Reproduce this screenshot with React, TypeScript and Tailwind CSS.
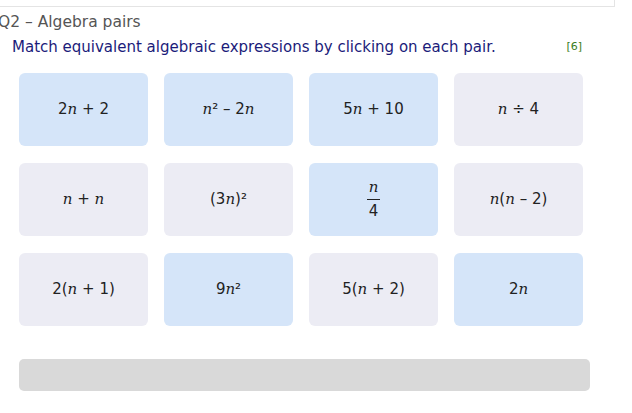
const N = () => <i className="font-['DejaVu_Serif',serif] italic">n</i>

type Card = { body: React.ReactNode; blue: boolean }

const cards: Card[] = [
  { body: <>2<N /> + 2</>, blue: true },
  { body: <><N />² – 2<N /></>, blue: true },
  { body: <>5<N /> + 10</>, blue: true },
  { body: <><N /> ÷ 4</>, blue: false },
  { body: <><N /> + <N /></>, blue: false },
  { body: <>(3<N />)²</>, blue: false },
  {
    body: (
      <span className="flex flex-col items-center leading-none">
        <span className="pb-[4px]"><N /></span>
        <span className="w-[13px] border-t border-[#222]" />
        <span className="pt-[4px]">4</span>
      </span>
    ),
    blue: true,
  },
  { body: <><N />(<N /> – 2)</>, blue: false },
  { body: <>2(<N /> + 1)</>, blue: false },
  { body: <>9<N />²</>, blue: true },
  { body: <>5(<N /> + 2)</>, blue: false },
  { body: <>2<N /></>, blue: true },
]

export default function App() {
  return (
    <div className="w-[632px] h-[413px] bg-white font-['DejaVu_Sans',sans-serif] overflow-hidden">
      <div className="h-[7px] w-[615px] border-b border-r border-[#e4e4e4]" />
      <div className="ml-[-2px] mt-[5px] text-[15.5px] leading-[20px] text-[#555]">Q2 – Algebra pairs</div>
      <div className="flex items-center w-[582px] pl-[12px] mt-[6px] h-[18px]">
        <span className="text-[15px] text-[#1b1b7a]">Match equivalent algebraic expressions by clicking on each pair.</span>
        <span className="ml-auto text-[11px] text-[#3a7d22]">[6]</span>
      </div>
      <div className="grid grid-cols-[129px_129px_129px_129px] gap-x-[16px] gap-y-[17px] ml-[19px] mt-[17px]">
        {cards.map((c, i) => (
          <div
            key={i}
            className={`h-[73px] rounded-[6px] flex items-center justify-center text-[15px] text-[#222] ${c.blue ? "bg-[#d5e5f9]" : "bg-[#ececf4]"}`}
          >
            <span className="whitespace-pre">{c.body}</span>
          </div>
        ))}
      </div>
      <div className="ml-[19px] mt-[33px] w-[571px] h-[32px] rounded-[5px] bg-[#d9d9d9]" />
    </div>
  )
}
